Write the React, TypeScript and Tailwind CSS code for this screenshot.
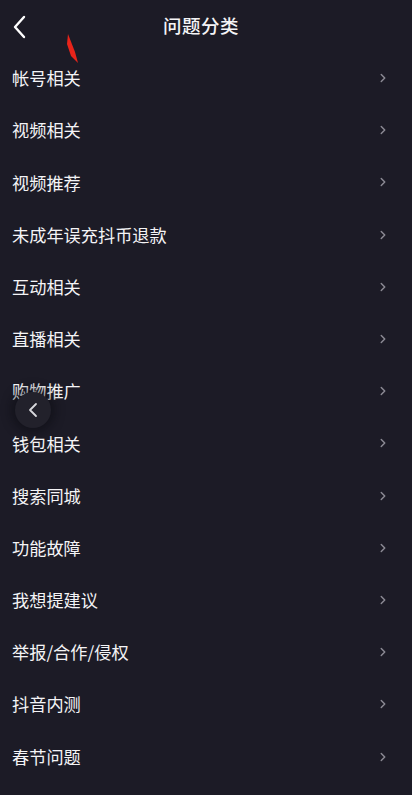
import { ChevronRight } from "lucide-react"

const categories = [
  "帐号相关",
  "视频相关",
  "视频推荐",
  "未成年误充抖币退款",
  "互动相关",
  "直播相关",
  "购物推广",
  "钱包相关",
  "搜索同城",
  "功能故障",
  "我想提建议",
  "举报/合作/侵权",
  "抖音内测",
  "春节问题",
]

export default function App() {
  return (
    <div
      className="relative w-[412px] h-[795px] overflow-hidden bg-[#1c1b26] text-[#f4f4f6]"
      style={{ fontFamily: '"Noto Sans CJK SC", "Noto Sans", sans-serif' }}
    >
      {/* Header */}
      <div className="relative flex items-center justify-center h-[52px] pr-[10px]">
        <button className="absolute left-[10px] top-[14px] text-white">
          <svg width="20" height="26" viewBox="0 0 20 26" fill="none">
            <path d="M14 3 L5 13 L14 23" stroke="currentColor" strokeWidth="2.4" strokeLinecap="round" strokeLinejoin="round" />
          </svg>
        </button>
        <h1 className="text-[18.5px] font-medium tracking-[0.5px]">问题分类</h1>
      </div>

      {/* Category list */}
      <ul>
        {categories.map((c) => (
          <li key={c} className="flex items-center justify-between h-[52.2px] pl-[12px] pr-[22px]">
            <span className="text-[17.2px]">{c}</span>
            <ChevronRight className="w-[14px] h-[14px] text-[#8b8a94]" strokeWidth={2.5} />
          </li>
        ))}
      </ul>

      {/* Red annotation arrow */}
      <svg className="absolute left-[60px] top-[30px]" width="24" height="36" viewBox="0 0 24 36">
        <path d="M8 4 L15 22 L18 33 L11 26 L7 14 Z" fill="#e8241a" />
      </svg>

      {/* Floating back button */}
      <div className="absolute left-[15px] top-[392px] w-[36px] h-[36px] rounded-full bg-[#22212b] shadow-[0_0_10px_4px_rgba(10,10,15,0.5)] flex items-center justify-center">
        <svg width="12" height="16" viewBox="0 0 12 16" fill="none">
          <path d="M9 2 L3 8 L9 14" stroke="#d8d8dc" strokeWidth="1.8" strokeLinecap="round" strokeLinejoin="round" />
        </svg>
      </div>
    </div>
  )
}
